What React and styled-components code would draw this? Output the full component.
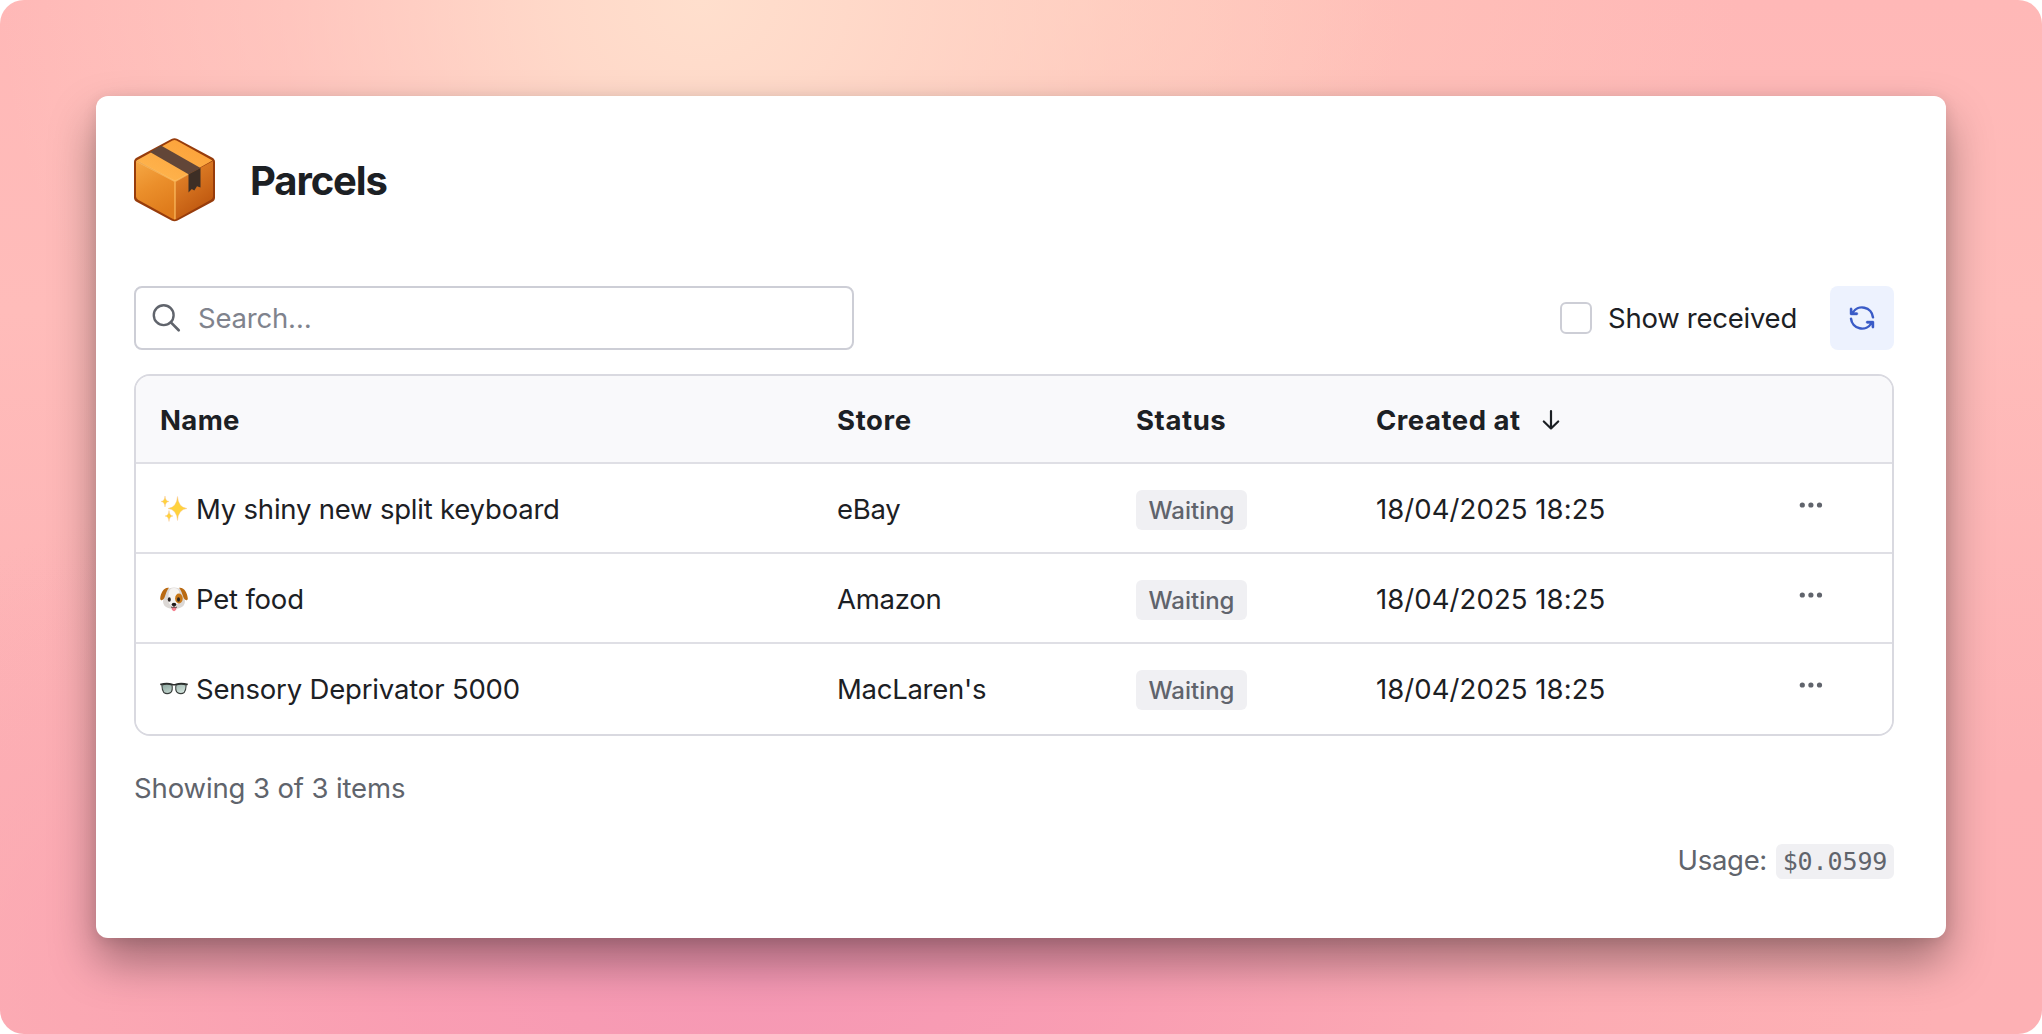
import React from "react";
import styled, { createGlobalStyle } from "styled-components";

const GlobalStyle = createGlobalStyle`
  *, *::before, *::after { box-sizing: border-box; }
  body {
    margin: 0;
    background: #ffffff;
    color: #1c2024;
    font-family: Inter, "Liberation Sans", sans-serif;
    font-size: 27.5px;
    line-height: 40px;
  }
`;

const Backdrop = styled.div`
  height: 1034px;
  padding: 96px;
  border-radius: 24px;
  background:
    radial-gradient(ellipse 700px 620px at 700px 0, #ffdfcd 0%, rgba(255, 220, 203, 0.9) 20%, rgba(255, 212, 198, 0.45) 60%, rgba(255, 200, 190, 0) 100%),
    radial-gradient(ellipse 660px 520px at 1080px 0, rgba(255, 208, 190, 0.7) 0%, rgba(255, 200, 186, 0.45) 45%, rgba(255, 190, 184, 0) 100%),
    radial-gradient(ellipse 1180px 560px at 760px 980px, #f598b4 0%, rgba(248, 154, 178, 0.85) 30%, rgba(250, 165, 178, 0.4) 68%, rgba(253, 180, 182, 0) 100%),
    linear-gradient(180deg, #ffb8b7 0%, #ffbcba 30%, #fdb1b4 75%, #fdb0b4 100%);
`;

const Card = styled.main`
  display: flex;
  flex-direction: column;
  height: 842px;
  padding: 40px 52px 0 38px;
  border-radius: 12px;
  background: #ffffff;
  box-shadow: 0 24px 46px rgba(0, 0, 0, 0.36), 0 3px 14px rgba(0, 0, 0, 0.1);
`;

const Header = styled.header`
  display: flex;
  align-items: center;
  gap: 31px;
  height: 88px;
`;

const Title = styled.h1`
  margin: 2px 0 0;
  font-size: 40px;
  line-height: 48px;
  font-weight: 700;
  letter-spacing: -1.1px;
`;

const Toolbar = styled.div`
  display: flex;
  align-items: center;
  height: 64px;
  margin-top: 62px;
`;

const SearchBox = styled.label`
  display: flex;
  align-items: center;
  gap: 17px;
  width: 720px;
  height: 64px;
  padding-left: 15px;
  border: 2px solid #cdced6;
  border-radius: 8px;
`;

const SearchInput = styled.input`
  flex: 1;
  min-width: 0;
  padding: 0;
  border: 0;
  outline: 0;
  background: transparent;
  font: inherit;
  letter-spacing: -0.2px;
  &::placeholder { color: #80838d; opacity: 1; }
`;

const CheckLabel = styled.label`
  display: flex;
  align-items: center;
  gap: 16px;
  margin-left: auto;
  white-space: nowrap;
  letter-spacing: -0.25px;
`;

const CheckBox = styled.span`
  width: 32px;
  height: 32px;
  border: 2px solid #cdced6;
  border-radius: 6px;
`;

const RefreshButton = styled.button`
  display: grid;
  place-items: center;
  width: 64px;
  height: 64px;
  margin-left: 33px;
  padding: 0;
  border: 0;
  border-radius: 8px;
  background: #edf2fe;
  color: #3a5bc7;
`;

const Table = styled.div`
  flex: none;
  height: 362px;
  margin-top: 24px;
  border: 2px solid #d9d9e0;
  border-radius: 16px;
  overflow: hidden;
`;

const Row = styled.div`
  display: grid;
  grid-template-columns: 677px 299px 240px 409px 1fr;
  height: ${(p) => (p.$head ? 88 : 90)}px;
  padding: ${(p) => (p.$head ? 24 : 25)}px 0 0 24px;
  border-bottom: 2px solid #dfdfe5;
  background: ${(p) => (p.$head ? "#f9f9fb" : "#ffffff")};
  font-weight: ${(p) => (p.$head ? 700 : 400)};
  line-height: ${(p) => (p.$head ? 41 : 40)}px;
  &:last-child { border-bottom: 0; }
`;

const Cell = styled.div`
  display: flex;
  align-items: flex-start;
  white-space: nowrap;
  letter-spacing: ${(p) => p.$track || 0}px;
`;

const Emoji = styled.svg`
  flex: none;
  width: 28px;
  height: 28px;
  margin: 6px 8px 0 0;
`;

const SortArrow = styled.svg`
  width: 18px;
  height: 22px;
  margin: 9px 0 0 21px;
`;

const Badge = styled.span`
  display: grid;
  place-items: center;
  width: 111px;
  height: 40px;
  margin-top: 1px;
  padding-top: 1px;
  border-radius: 6px;
  background: #f0f0f3;
  color: #60646c;
  font-size: 24px;
  line-height: 34px;
  font-weight: 500;
`;

const MoreButton = styled.button`
  display: grid;
  place-items: center;
  width: 30px;
  height: 32px;
  margin: 0 0 0 11px;
  padding: 0;
  border: 0;
  background: none;
  color: #60646c;
`;

const Summary = styled.p`
  margin: 32px 0 0;
  color: #60646c;
  letter-spacing: -0.12px;
`;

const Usage = styled.p`
  display: flex;
  justify-content: flex-end;
  align-items: center;
  gap: 9px;
  margin: 32px 0 0;
  color: #60646c;
  letter-spacing: -0.3px;
`;

const Code = styled.code`
  display: grid;
  place-items: center;
  width: 118px;
  height: 35px;
  margin-top: 2px;
  border-radius: 6px;
  background: #f0f0f3;
  font-family: "DejaVu Sans Mono", monospace;
  font-size: 25px;
  line-height: 35px;
  letter-spacing: -0.1px;
`;

function ParcelIcon() {
  return (
    <svg width="85" height="88" viewBox="0 -2 85 88" aria-label="Parcel">
      <defs>
        <linearGradient id="boxLeft" x1="0" y1="0" x2="0.35" y2="1">
          <stop offset="0" stopColor="#f6a844" />
          <stop offset="0.5" stopColor="#eb8f2b" />
          <stop offset="1" stopColor="#df7c1c" />
        </linearGradient>
        <linearGradient id="boxRight" x1="0.3" y1="0" x2="0.8" y2="1">
          <stop offset="0" stopColor="#e5862b" />
          <stop offset="1" stopColor="#b84f0a" />
        </linearGradient>
        <linearGradient id="boxTop" x1="0" y1="1" x2="1" y2="0">
          <stop offset="0" stopColor="#ffb852" />
          <stop offset="1" stopColor="#fb9e35" />
        </linearGradient>
      </defs>
      <path d="M37.5 1 Q40.500 -.5 43.500 1 L78 19.500 Q81 21 81 24 V59.500 Q81 62.500 78 64 L43.500 82.500 Q40.500 84 37.500 82.500 L3 64 Q0 62.500 0 59.500 V24 Q0 21 3 19.500Z" fill="#973c0b" />
      <path d="M2 23 L41 43.500 V82 L38.500 80.800 L4 61.800 Q2 60.500 2 58.500Z" fill="url(#boxLeft)" />
      <path d="M79 23 L41 43.500 V82 L43 80.800 L77 61.800 Q79 60.500 79 58.500Z" fill="url(#boxRight)" />
      <path d="M38.500 2.500 Q40.500 1.400 42.500 2.500 L78.500 22.600 L41 43.500 L2.500 22.600Z" fill="url(#boxTop)" />
      <path d="M2.500 23 L41 43.500 L55 35.700 M41 43.500 V81" fill="none" stroke="#ffc165" strokeWidth="1.500" opacity=".75" />
      <path d="M27 7.500 L66.500 30 L54.500 36.300 L16 14Z" fill="#624638" />
      <path d="M54.500 36.300 L66.500 30 V49.500 L63 48.300 L60.300 52.500 L57.800 51 L54.500 54.500Z" fill="#3d2e25" />
    </svg>
  );
}

function SparklesEmoji() {
  const star = (x, y, w, h) =>
    `M${x} ${y - h} Q${x + w * 0.08} ${y - h * 0.08} ${x + w} ${y} Q${x + w * 0.08} ${y + h * 0.08} ${x} ${y + h} Q${x - w * 0.08} ${y + h * 0.08} ${x - w} ${y} Q${x - w * 0.08} ${y - h * 0.08} ${x} ${y - h}Z`;
  return (
    <Emoji viewBox="0 0 28 28">
      <g fill="#ffd23c" stroke="#f7c08a" strokeWidth=".4">
        <path d={star(17.5, 13.500, 9.500, 12)} />
        <path d={star(5, 6.500, 4, 5.500)} />
        <path d={star(9, 21, 4, 5.500)} />
      </g>
    </Emoji>
  );
}

function DogEmoji() {
  return (
    <Emoji viewBox="0 0 28 28">
      <path d="M14 2.500 C21 2.500 23 6 24 12 C27 19 23 24 14 24 C5 24 1 19 4 12 C5 6 7 2.500 14 2.500Z" fill="#dcd8d5" />
      <path d="M14 3 C19 3 20 7 19.500 13 C19 20 15 21 14 21 C10 21 7.500 18 8.500 12 C8.500 6 10 3 14 3Z" fill="#f6f4f2" />
      <path d="M9 2.800 C4 1.800 .5 8 .2 13.500 C.2 16 3 16 4.500 12.500 C6 9 6.500 5.500 9 2.800Z M19 2.800 C24 1.800 27.500 8 27.800 13.500 C27.800 16 25 16 23.500 12.500 C22 9 21.500 5.500 19 2.800Z" fill="#b96a13" />
      <ellipse cx="18.900" cy="13.500" rx="3.800" ry="5" fill="#c77818" />
      <ellipse cx="9.300" cy="14.500" rx="1.500" ry="2.200" fill="#2b2524" />
      <ellipse cx="18.500" cy="14.500" rx="1.500" ry="2.200" fill="#2b2524" />
      <path d="M11.800 22 H16.200 V24.500 Q14 28 11.800 24.500Z" fill="#f4808f" />
      <ellipse cx="14" cy="19.500" rx="2.300" ry="1.700" fill="#1e1a1a" />
      <path d="M14 20 V22 M11 22 Q12.500 23.300 14 22 Q15.500 23.300 17 22" fill="none" stroke="#3c3432" strokeWidth=".8" />
    </Emoji>
  );
}

function GlassesEmoji() {
  return (
    <Emoji viewBox="0 -1 28 28">
      <defs>
        <linearGradient id="lens" x1="0" y1="0" x2="1" y2="1">
          <stop offset="0" stopColor="#8aa59d" />
          <stop offset="1" stopColor="#dcebe4" />
        </linearGradient>
      </defs>
      <path d="M1.800 9 Q7 7.300 12 9 Q13 14 10.800 16.500 Q7 18.800 3.800 16.500 Q2 14 1.800 9Z M26.200 9 Q21 7.300 16 9 Q15 14 17.200 16.500 Q21 18.800 24.200 16.500 Q26 14 26.200 9Z" fill="url(#lens)" stroke="#3a3f3d" strokeWidth="1.100" />
      <path d="M.2 8.500 Q7 6.500 12.500 8.500 Q14 9 15.500 8.500 Q21 6.500 27.800 8.500" fill="none" stroke="#2b2f2d" strokeWidth="1.600" />
    </Emoji>
  );
}

function SearchIcon() {
  return (
    <svg width="30" height="30" viewBox="-0.5 0 30 30" fill="none" stroke="#60646c" strokeWidth="2.400">
      <circle cx="12.200" cy="12.200" r="9.900" />
      <path d="M19.400 19.400 L27.200 27.200" strokeLinecap="round" strokeWidth="2.700" />
    </svg>
  );
}

function RefreshIcon() {
  return (
    <svg width="26" height="26" viewBox="-1 -1 26 26" fill="none" stroke="currentColor" strokeWidth="2.500" strokeLinecap="round">
      <path d="M2.500 7 A11 11 0 0 1 23 11.300" />
      <path d="M21.500 17 A11 11 0 0 1 1 12.700" />
      <path d="M0 2.800 Q0 1.800 1 1.800 Q2.100 1.800 2.200 3 V4.800 L4.400 6.600 H6.800 Q7.900 6.700 7.900 7.800 Q7.900 8.900 6.800 9 H1 Q0 9 0 8Z" fill="currentColor" stroke="currentColor" strokeWidth=".4" />
      <path d="M24 21.200 Q24 22.200 23 22.200 Q21.900 22.200 21.800 21 V19.200 L19.600 17.400 H17.200 Q16.100 17.300 16.100 16.200 Q16.100 15.100 17.200 15 H23 Q24 15 24 16Z" fill="currentColor" stroke="currentColor" strokeWidth=".4" />
    </svg>
  );
}

function DotsIcon() {
  return (
    <svg width="24" height="8" viewBox="0 0 24 8" fill="currentColor">
      <circle cx="3.300" cy="4" r="2.600" />
      <circle cx="11.900" cy="4" r="2.600" />
      <circle cx="20.500" cy="4" r="2.600" />
    </svg>
  );
}

const parcels = [
  { icon: SparklesEmoji, name: "My shiny new split keyboard", store: "eBay", track: -0.21 },
  { icon: DogEmoji, name: "Pet food", store: "Amazon", track: -0.2 },
  { icon: GlassesEmoji, name: "Sensory Deprivator 5000", store: "MacLaren's", track: -0.17 },
];

export default function App() {
  return (
    <>
      <GlobalStyle />
      <Backdrop>
        <Card>
          <Header>
            <ParcelIcon />
            <Title>Parcels</Title>
          </Header>
          <Toolbar>
            <SearchBox>
              <SearchIcon />
              <SearchInput placeholder="Search…" aria-label="Search" />
            </SearchBox>
            <CheckLabel>
              <CheckBox />
              Show received
            </CheckLabel>
            <RefreshButton aria-label="Refresh">
              <RefreshIcon />
            </RefreshButton>
          </Toolbar>
          <Table>
            <Row $head>
              <Cell $track={0.35}>Name</Cell>
              <Cell $track={0.65}>Store</Cell>
              <Cell $track={0.6}>Status</Cell>
              <Cell $track={0.5}>
                Created at
                <SortArrow viewBox="0 0 18 22" fill="none" stroke="#1c2024" strokeWidth="2.200" strokeLinecap="round" strokeLinejoin="round">
                  <path d="M9 2 V19.500 M1.800 12.500 L9 19.500 L16.200 12.500" />
                </SortArrow>
              </Cell>
              <Cell />
            </Row>
            {parcels.map(({ icon: Icon, name, store, track }) => (
              <Row key={name}>
                <Cell $track={track}>
                  <Icon />
                  {name}
                </Cell>
                <Cell $track={-0.28}>{store}</Cell>
                <Cell>
                  <Badge>Waiting</Badge>
                </Cell>
                <Cell $track={0.08}>18/04/2025 18:25</Cell>
                <Cell>
                  <MoreButton aria-label="More">
                    <DotsIcon />
                  </MoreButton>
                </Cell>
              </Row>
            ))}
          </Table>
          <Summary>Showing 3 of 3 items</Summary>
          <Usage>
            Usage: <Code>$0.0599</Code>
          </Usage>
        </Card>
      </Backdrop>
    </>
  );
}
